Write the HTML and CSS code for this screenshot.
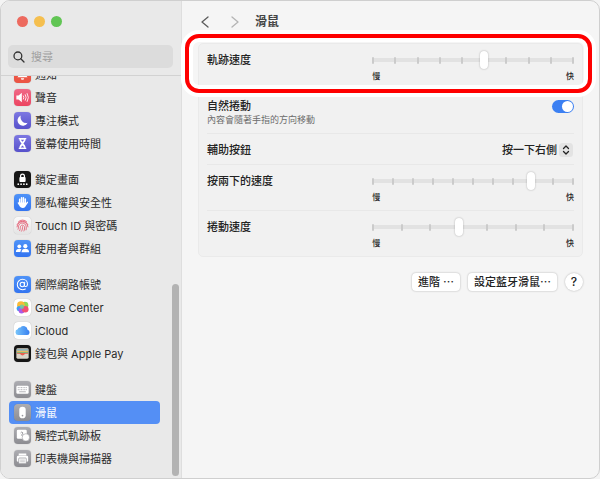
FILE: index.html
```
<!DOCTYPE html>
<html lang="zh-Hant">
<head>
    <meta charset="UTF-8">
    <meta name="viewport" content="width=device-width, initial-scale=1.0">
    <title>滑鼠</title>
    <link rel="stylesheet" href="styles.css">
</head>
<body>
    <div class="window">
        <aside class="sidebar">
            <div class="sidebar-top">
                <div class="lights">
                    <span class="light red"></span>
                    <span class="light yellow"></span>
                    <span class="light green"></span>
                </div>
                <label class="search">
                    <svg width="12" height="12" viewBox="0 0 12 12" fill="none" stroke="#333" stroke-width="1.3" stroke-linecap="round"><circle cx="4.9" cy="4.9" r="3.9"/><path d="M7.8 7.8L11 11"/></svg>
                    <input type="search" placeholder="搜尋" aria-label="搜尋">
                </label>
            </div>
            <nav class="list">
                <div class="group">
                    <a href="#" class="item">
                        <svg class="icon coral" viewBox="0 0 18 18"><path d="M3.5 12c1.6-1.6 1.4-3 1.7-5 .3-2.200 1.800-3.500 3.800-3.500s3.500 1.300 3.800 3.500c.3 2 .1 3.400 1.700 5z" fill="#fff"/><path d="M7.200 13h3.600a1.800 1.600 0 0 1-3.600 0z" fill="#fff"/></svg>
                        通知
                    </a>
                    <a href="#" class="item">
                        <svg class="icon pink" viewBox="0 0 18 18"><path d="M2.500 7h2.300l3.500-2.900v9.800L4.800 11H2.500z" fill="#fff"/><path d="M10 7.300q1 1.700 0 3.400M12 6q1.800 3 0 6M14 4.800q2.600 4.200 0 8.400" fill="none" stroke="#fff" stroke-width=".9" stroke-linecap="round"/></svg>
                        聲音
                    </a>
                    <a href="#" class="item">
                        <svg class="icon indigo" viewBox="0 0 18 18"><path d="M7.200 3.600a6.200 6.200 0 0 0 7.300 7.900 5.700 5.700 0 1 1-7.300-7.900z" fill="#fff"/></svg>
                        專注模式
                    </a>
                    <a href="#" class="item">
                        <svg class="icon indigo" viewBox="0 0 18 18"><path d="M5 3.300h8v1.300h-.7c0 2.500-1.700 3.300-2.300 4.400.6 1.100 2.300 1.900 2.300 4.400h.7v1.300H5v-1.300h.7c0-2.500 1.700-3.300 2.300-4.400-.6-1.100-2.300-1.900-2.300-4.400H5z" fill="#fff"/><path d="M7.200 5h3.600L9 7.200zM7 13.200L9 11l2 2.200z" fill="#6a62d8"/></svg>
                        螢幕使用時間
                    </a>
                </div>
                <div class="group">
                    <a href="#" class="item">
                        <svg class="icon black" viewBox="0 0 18 18"><path d="M7 7V5.200a2 2 0 0 1 4 0V7" fill="none" stroke="#fff" stroke-width="1.300"/><rect x="5.700" y="6.400" width="6.600" height="5.200" rx="1" fill="#fff"/><g fill="#fff"><circle cx="4.500" cy="14" r=".9"/><circle cx="7.500" cy="14" r=".9"/><circle cx="10.500" cy="14" r=".9"/><circle cx="13.500" cy="14" r=".9"/></g></svg>
                        鎖定畫面
                    </a>
                    <a href="#" class="item">
                        <svg class="icon blue" viewBox="0 0 18 18"><path d="M6 5.500v5M8 4v6M10 4v6M12 5.300V11" stroke="#fff" stroke-width="1.600" stroke-linecap="round"/><path d="M5.200 9h7.600v1.600c0 2.700-1.400 4.200-3.500 4.200-1.900 0-2.900-.8-3.900-2.900L4 9.800c-.4-1 .7-1.400 1.200-.8z" fill="#fff"/><path d="M12.200 11.800l2-3" stroke="#fff" stroke-width="1.400" stroke-linecap="round"/></svg>
                        隱私權與安全性
                    </a>
                    <a href="#" class="item">
                        <svg class="icon pale" viewBox="0 0 18 18"><g fill="none" stroke="#e4687c" stroke-width="1" stroke-linecap="round"><path d="M4.800 4.900a6 6 0 0 1 8.500 0M3.400 7.600a6 5 0 0 1 11.300.4M3.200 10.500c.2-7.500 11.300-7.300 11.600 0M4.300 13c.8-1.700.2-3 .8-4.200 1.600-3.600 7-2.800 7.700.8.300 1.400.3 2.600 0 4M6 14.500c1-2 .4-3.200.9-4.500.8-2 3.700-1.700 4.100.4.300 1.500.2 3-.5 4.400M8 15c.9-1.500 1.100-3 1-4.700"/></g></svg>
                        Touch ID 與密碼
                    </a>
                    <a href="#" class="item">
                        <svg class="icon blue" viewBox="0 0 18 18"><g fill="#fff"><circle cx="5.600" cy="6.700" r="2"/><path d="M2 12.800c0-2.400 1.500-3.500 3.500-3.500 1.100 0 1.900.3 2.500.8-.9.700-1.200 1.600-1.200 2.700z"/><circle cx="12" cy="6.500" r="2.200"/><path d="M8 13c0-2.500 1.700-3.700 4-3.700s4 1.200 4 3.700z"/></g></svg>
                        使用者與群組
                    </a>
                </div>
                <div class="group">
                    <a href="#" class="item">
                        <svg class="icon blue" viewBox="0 0 18 18"><g fill="none" stroke="#fff" stroke-width="1.100" stroke-linecap="round"><circle cx="8.800" cy="9" r="2.300"/><path d="M11.300 6.600l-.3 3.200c-.1 2 3.300 2 3.300-1.100C14.300 5.600 12 3.500 9 3.500S3.500 5.900 3.500 9s2.400 5.500 5.500 5.500c1.200 0 2.100-.3 3-.8"/></g></svg>
                        網際網路帳號
                    </a>
                    <a href="#" class="item">
                        <svg class="icon white" viewBox="0 0 18 18"><circle cx="11.500" cy="6.600" r="3.700" fill="#8fd957"/><circle cx="7.300" cy="6.500" r="4" fill="#f9ba38"/><circle cx="5.500" cy="10" r="2.700" fill="#3f9df3"/><circle cx="8" cy="12.200" r="3.200" fill="#a85ce8"/><circle cx="11.900" cy="10.800" r="3.500" fill="#f24f72"/><circle cx="8.300" cy="8.200" r="2.400" fill="#5fd0b0" opacity=".8"/></svg>
                        Game Center
                    </a>
                    <a href="#" class="item">
                        <svg class="icon white" viewBox="0 0 18 18"><defs><linearGradient id="cloud" x2="1"><stop stop-color="#79c6fa"/><stop offset="1" stop-color="#377ff0"/></linearGradient></defs><path d="M4.500 13.800a3.100 3.100 0 0 1-.6-6.100 2.500 2.500 0 0 1 2.900-1.900A4.400 4.400 0 0 1 14.400 8.300a2.800 2.800 0 0 1-.5 5.500z" fill="url(#cloud)"/></svg>
                        iCloud
                    </a>
                    <a href="#" class="item">
                        <svg class="icon black" viewBox="0 0 18 18"><rect x="2.500" y="3.500" width="13" height="11" rx="1.500" fill="#d9d5c9"/><path d="M3.200 4.500h11.600v1.500H3.200z" fill="#7fa9b8"/><path d="M3.200 6h11.600v1.300H3.200z" fill="#e6bd63"/><path d="M3.200 7.300h11.600v1.200H3.200z" fill="#86b579"/><path d="M3.200 8.500h11.600v.8h-3q-2.800 3.400-5.600 0h-3z" fill="#e8604f"/></svg>
                        錢包與 Apple Pay
                    </a>
                </div>
                <div class="group">
                    <a href="#" class="item">
                        <svg class="icon gray" viewBox="0 0 18 18"><rect x="2.500" y="5" width="13" height="8.400" rx="1.300" fill="#fff"/><path d="M4 7h10M4 9.200h10" stroke="#b0b0b5" stroke-width="1" stroke-dasharray="1.100 .6"/><path d="M5.500 11.400h7" stroke="#b0b0b5"/></svg>
                        鍵盤
                    </a>
                    <a href="#" class="item selected" aria-current="page">
                        <svg class="icon gray" viewBox="0 0 18 18"><rect x="5.600" y="2.800" width="6.800" height="12.400" rx="3.300" fill="#fff"/><circle cx="9" cy="12.300" r=".9" fill="#98989d"/></svg>
                        滑鼠
                    </a>
                    <a href="#" class="item">
                        <svg class="icon gray" viewBox="0 0 18 18"><rect x="3" y="3" width="10.500" height="9.500" rx="1.300" fill="#fff"/><path d="M7 6.300q1.200-2 2.500 0L8 8.800l3.300 2" fill="none" stroke="#98989d"/><circle cx="12.600" cy="11" r="3.900" fill="#fff" stroke="#98989d" stroke-width=".6"/></svg>
                        觸控式軌跡板
                    </a>
                    <a href="#" class="item">
                        <svg class="icon gray" viewBox="0 0 18 18"><path d="M5 3.700h8v2H5z" fill="#fff"/><rect x="3" y="6" width="12" height="6.500" rx="1.400" fill="#fff"/><rect x="5" y="8.500" width="8" height="6" rx=".8" fill="#fff" stroke="#98989d" stroke-width=".8"/><path d="M6.500 10.700h5M6.500 12.500h5" stroke="#a8a8ad" stroke-width=".7"/></svg>
                        印表機與掃描器
                    </a>
                </div>
            </nav>
            <div class="scrollbar"></div>
        </aside>

        <main class="content">
            <header class="toolbar">
                <button class="nav" aria-label="返回"><svg width="8" height="12" viewBox="0 0 8 12" fill="none" stroke="#5c5c5c" stroke-width="1.300" stroke-linecap="round" stroke-linejoin="round"><path d="M7 1L1 6l6 5"/></svg></button>
                <button class="nav" aria-label="往前"><svg width="8" height="12" viewBox="0 0 8 12" fill="none" stroke="#b4b4b4" stroke-width="1.300" stroke-linecap="round" stroke-linejoin="round"><path d="M1 1l6 5-6 5"/></svg></button>
                <h1>滑鼠</h1>
            </header>

            <section class="card">
                <div class="row highlighted">
                    <label for="tracking">軌跡速度</label>
                    <div class="slider">
                        <div class="ticks"><i></i><i></i><i></i><i></i><i></i><i></i><i></i><i></i><i></i><i></i></div>
                        <input type="range" id="tracking" min="0" max="9" value="5">
                        <div class="ends"><span>慢</span><span>快</span></div>
                    </div>
                </div>
                <div class="row">
                    <label for="natural">自然捲動<small>內容會隨著手指的方向移動</small></label>
                    <input type="checkbox" class="switch" id="natural" checked>
                </div>
                <div class="row single">
                    <label for="secondary">輔助按鈕</label>
                    <div class="picker">
                        <select id="secondary">
                            <option>按一下右側</option>
                        </select>
                        <svg width="14" height="14" viewBox="0 0 14 14"><rect width="14" height="14" rx="3.500" fill="#e3e3e3"/><path d="M4.500 5.500L7 3l2.500 2.500M4.500 8.500L7 11l2.500-2.500" fill="none" stroke="#222" stroke-width="1.300" stroke-linecap="round" stroke-linejoin="round"/></svg>
                    </div>
                </div>
                <div class="row">
                    <label for="double">按兩下的速度</label>
                    <div class="slider">
                        <div class="ticks"><i></i><i></i><i></i><i></i><i></i><i></i><i></i><i></i><i></i><i></i><i></i></div>
                        <input type="range" id="double" min="0" max="10" value="8">
                        <div class="ends"><span>慢</span><span>快</span></div>
                    </div>
                </div>
                <div class="row">
                    <label for="scrolling">捲動速度</label>
                    <div class="slider">
                        <div class="ticks"><i></i><i></i><i></i><i></i><i></i><i></i><i></i><i></i></div>
                        <input type="range" id="scrolling" min="0" max="7" value="3">
                        <div class="ends"><span>慢</span><span>快</span></div>
                    </div>
                </div>
            </section>

            <footer class="actions">
                <button class="push">進階 ⋯</button>
                <button class="push">設定藍牙滑鼠⋯</button>
                <button class="help" aria-label="輔助說明">?</button>
            </footer>
        </main>
    </div>
</body>
</html>
```
FILE: styles.css
```
* {
    box-sizing: border-box;
}
body {
    margin: 0;
    background: #f4f4f4;
    color: #222;
    font: 11px/16px Inter, "Noto Sans CJK TC", sans-serif;
}
button, input, select {
    margin: 0;
    padding: 0;
    border: none;
    background: none;
    color: inherit;
    font: inherit;
}
.window {
    display: flex;
    height: 100vh;
    border: 1px solid #cfcfcf;
    border-radius: 10px;
    background: #f5f5f5;
    overflow: hidden;
}

/* sidebar */
.sidebar {
    position: relative;
    display: flex;
    flex-direction: column;
    width: 181px;
    flex-shrink: 0;
    background: #e9e9e9;
    border-right: 1px solid #dedede;
}
.sidebar-top {
    padding: 15px 8px 7px 7px;
    border-bottom: 1px solid #d2d2d2;
}
.lights {
    display: flex;
    gap: 6px;
    padding: 0 9px;
    margin-bottom: 18px;
}
.light {
    width: 11px;
    height: 11px;
    border-radius: 50%;
}
.red {
    background: #ed6a5f;
}
.yellow {
    background: #f5bf4f;
}
.green {
    background: #61c554;
}
.search {
    display: flex;
    align-items: center;
    gap: 6px;
    height: 23px;
    padding: 0 5px;
    border-radius: 5px;
    background: #dcdcdc;
}
.search input {
    flex: 1;
    min-width: 0;
    outline: none;
}
.search input::placeholder {
    color: #a0a0a0;
}
/* scrolled to the end, so the first item is partly hidden */
.list {
    flex: 1;
    min-height: 0;
    display: flex;
    flex-direction: column;
    justify-content: flex-end;
    gap: 13px;
    padding: 0 21px 8px 8px;
    overflow: hidden;
}
.item {
    display: flex;
    align-items: center;
    gap: 4px;
    height: 23px;
    padding: 0 5px;
    border-radius: 4px;
    color: #2a2a2a;
    text-decoration: none;
    white-space: nowrap;
}
.item.selected {
    background: #548ff5;
    color: #fff;
}
.icon {
    width: 17px;
    height: 17px;
    border-radius: 4px;
    box-shadow: 0 0 1px rgba(0, 0, 0, 0.3);
}
.coral {
    background: #ec5545;
}
.pink {
    background: linear-gradient(#f06a88, #ec4460);
}
.indigo {
    background: linear-gradient(#7d78e2, #5751cb);
}
.black {
    background: #161616;
}
.blue {
    background: linear-gradient(#4f93f8, #3374f0);
}
.pale {
    background: linear-gradient(#fafafa, #e4e4e4);
}
.white {
    background: #fff;
}
.gray {
    background: linear-gradient(#adadb2, #8c8c91);
}
.scrollbar {
    position: absolute;
    right: 2px;
    top: 283px;
    bottom: 2px;
    width: 7px;
    border-radius: 4px;
    background: #b3b3b3;
}

/* content */
.content {
    flex: 1;
    min-width: 0;
    padding: 0 16px;
    font-weight: 500;
}
.toolbar {
    display: flex;
    align-items: center;
    height: 42px;
    padding-left: 3px;
}
.nav {
    display: flex;
    width: 30px;
}
.toolbar h1 {
    margin: 0 0 0 -6px;
    font-size: 12px;
    font-weight: 700;
    color: #444;
}
.card {
    padding: 0 8px;
    border: 1px solid #eaeaea;
    border-radius: 5px;
    background: #f1f1f1;
}
.row {
    display: flex;
    justify-content: space-between;
    align-items: flex-start;
    min-height: 44px;
    padding: 8px 0 5px;
    border-bottom: 1px solid #e8e8e8;
}
.row:last-child {
    border-bottom: none;
}
.row.single {
    min-height: 31px;
}
.highlighted {
    position: relative;
}
.highlighted::after {
    content: "";
    position: absolute;
    inset: -10px -18px -4px -22px;
    border: 4px solid #f00;
    border-radius: 14px;
    box-shadow: 0 0 0 4px #fff, inset 0 0 0 4px #fff;
    pointer-events: none;
}
small {
    display: block;
    font-size: 9px;
    line-height: 12px;
    font-weight: 400;
    color: #6c6c6c;
}

/* tick marks and range input share the first grid row */
.slider {
    display: grid;
    grid-template-rows: 16px 16px;
    width: 55%;
}
.ticks, .slider input {
    grid-area: 1 / 1;
}
.ticks {
    display: flex;
    justify-content: space-between;
    align-items: center;
    background: linear-gradient(#e2e2e2, #e2e2e2) center / 100% 4px no-repeat;
}
.ticks i {
    width: 2px;
    height: 7px;
    border-radius: 1px;
    background: #cbcbcb;
}
.slider input {
    appearance: none;
    width: 100%;
    height: 16px;
}
.slider input::-webkit-slider-thumb {
    appearance: none;
    width: 8px;
    height: 18px;
    border-radius: 4px;
    background: #fff;
    box-shadow: 0 0 2px rgba(0, 0, 0, 0.3);
}
.ends {
    display: flex;
    justify-content: space-between;
    font-size: 8px;
}
.switch {
    appearance: none;
    display: flex;
    width: 22px;
    height: 13px;
    margin-top: 2px;
    padding: 1px;
    border-radius: 7px;
    background: #c8c8c8;
}
.switch::before {
    content: "";
    width: 11px;
    height: 11px;
    border-radius: 50%;
    background: #fff;
}
.switch:checked {
    justify-content: flex-end;
    background: #3c80f2;
}
.picker {
    display: flex;
    align-items: center;
    gap: 2px;
    padding-right: 1px;
}
.picker select {
    appearance: none;
    height: 16px;
    text-align-last: right;
    outline: none;
}
.actions {
    display: flex;
    justify-content: flex-end;
    gap: 8px;
    padding-top: 16px;
}
.push, .help {
    height: 18px;
    background: #fff;
    box-shadow: 0 0 2px rgba(0, 0, 0, 0.3);
}
.push {
    padding: 0 6px;
    border-radius: 4px;
}
.help {
    width: 18px;
    border-radius: 50%;
    font-size: 12px;
}
```
